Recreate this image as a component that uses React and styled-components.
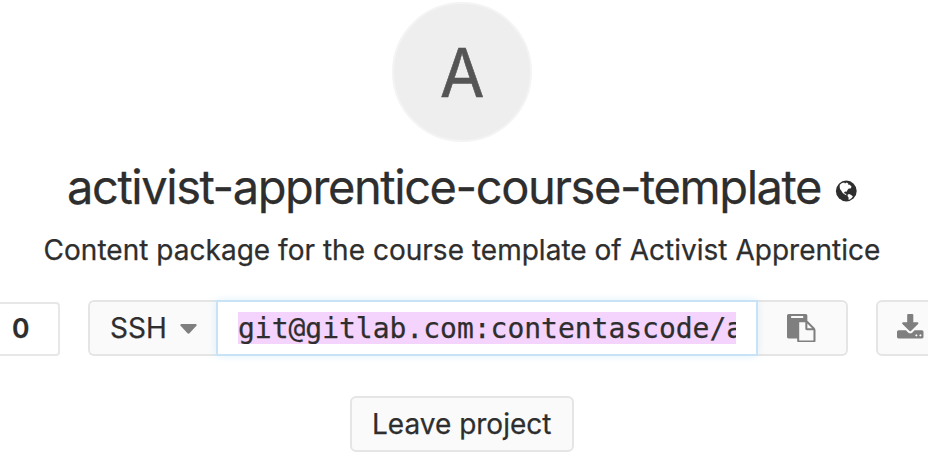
import React from "react";
import styled, { createGlobalStyle } from "styled-components";

const GlobalStyle = createGlobalStyle`
  * { box-sizing: border-box; }
  body { margin: 0; background: #fff; overflow: hidden; }
`;

const Page = styled.main`
  display: flex;
  flex-direction: column;
  align-items: center;
  width: 924px;
  height: 476px;
  padding-top: 2px;
  color: #2e2e2e;
  font-family: Inter, sans-serif;
  white-space: nowrap;
  -webkit-text-stroke: 0.25px currentColor;
`;

const Avatar = styled.div`
  display: flex;
  align-items: center;
  justify-content: center;
  width: 140px;
  height: 140px;
  flex: none;
  border: 2px solid #f4f4f4;
  border-radius: 50%;
  background: #eee;
  color: #555;
  font-size: 67px;
  line-height: 136px;
  padding-top: 2px;
  -webkit-text-stroke-width: 0.6px;
`;

const Letter = styled.span`
  transform: scaleX(0.96);
`;

const Title = styled.h1`
  display: flex;
  align-items: center;
  align-self: flex-start;
  height: 60px;
  margin: 15px 0 0 67px;
  font-size: 47px;
  font-weight: 400;
  line-height: 60px;
  letter-spacing: -1.43px;
`;

const TitleText = styled.span`
  width: 767px;
`;

const Globe = styled.svg`
  width: 24px;
  height: 24px;
  margin-top: 8px;
`;

const Description = styled.p`
  height: 36px;
  margin: 15px 0 0;
  font-size: 28px;
  line-height: 36px;
  letter-spacing: 0.02px;
`;

const Controls = styled.div`
  display: flex;
  align-items: flex-end;
  align-self: flex-start;
  height: 56px;
  margin-top: 32px;
  font-size: 28px;
`;

const Count = styled.div`
  width: 60px;
  height: 54px;
  margin-right: 28px;
  border: 2px solid #e7e7e7;
  border-left: 0;
  border-radius: 0 4px 4px 0;
  padding-left: 12px;
  font-size: 26.5px;
  font-weight: 600;
  line-height: 49px;
`;

const Button = styled.button`
  display: flex;
  align-items: center;
  height: 56px;
  width: ${(p) => p.$width}px;
  flex: none;
  padding: 0 0 0 ${(p) => p.$inset}px;
  border: 2px solid #e5e5e5;
  border-width: ${(p) => (p.$joined === "left" ? "2px 2px 2px 0" : p.$joined === "right" ? "2px 0 2px 2px" : "2px")};
  border-radius: ${(p) => (p.$joined === "left" ? "0 6px 6px 0" : p.$joined === "right" ? "6px 0 0 6px" : "6px")};
  background: #fafafa;
  color: #2e2e2e;
  font: 400 28px/52px Inter, sans-serif;
`;

const Caret = styled.svg`
  width: 17px;
  height: 10px;
  margin: 1px 0 0 13px;
`;

const CloneUrl = styled.div`
  z-index: 1;
  width: 542px;
  height: 56px;
  flex: none;
  padding: 10px 20px;
  border: 2px solid #c8e2f7;
  background: #fff;
  box-shadow: 0 0 8px rgba(120, 190, 240, 0.2);
`;

const SelectedText = styled.div`
  height: 32px;
  overflow: hidden;
  background: #f4d3fd;
  font: 28px/33px "DejaVu Sans Mono", monospace;
  letter-spacing: -0.02px;
`;

const Icon = styled.svg`
  width: 28.5px;
  height: 28.5px;
  fill: #7f7f7f;
`;

const Download = styled(Button)`
  margin-left: 28px;
`;

const Leave = styled(Button)`
  margin-top: 40px;
`;

export default function App() {
  return (
    <>
      <GlobalStyle />
      <Page>
        <Avatar><Letter>A</Letter></Avatar>
        <Title>
          <TitleText>activist-apprentice-course-template</TitleText>
          <Globe viewBox="0 0 24 24" aria-label="Public">
            <circle cx="12.3" cy="12" r="10.4" fill="#2e2e2e" />
            <path fill="#fff" d="M5.8 5.7 8 4l2.2-.6.8 1 1.5-.8 1.8.9-.4 1 1.9.2 1.8 2-1 1.7-1.8.2-1.3 1.5-.9 1.6-1.4-.2-1.2.9.7 1.2 1.1.2.8 1.4-1.4-.5-2.5-1.8-1.2-2-1.5-1.8L5.7 8Z" />
            <path fill="#fff" d="m13.8 15.5 1.4-.4 2 .9 1.7 1.4-1.2 1.6-1.8 1.4-1.4.4.1-2.3-1.1-1.6Z" />
          </Globe>
        </Title>
        <Description>Content package for the course template of Activist Apprentice</Description>
        <Controls>
          <Count>0</Count>
          <Button $width={128} $inset={20} $joined="right">
            SSH
            <Caret viewBox="0 0 17 10">
              <path fill="#7f7f7f" d="M1.2 0h14.6q1.5.5.6 1.8L9.5 9.2q-1 .9-2 0L.6 1.8Q-.3.5 1.2 0Z" />
            </Caret>
          </Button>
          <CloneUrl><SelectedText>git@gitlab.com:contentascode/activist-apprentice-course-template.git</SelectedText></CloneUrl>
          <Button $width={90} $inset={29} $joined="left" aria-label="Copy">
            <Icon viewBox="0 0 1792 1792">
              <path d="M768 1664h896v-640h-416q-40 0-68-28t-28-68v-416h-384v1152zm256-1440v-64q0-13-9.5-22.5t-22.5-9.5h-704q-13 0-22.5 9.5t-9.5 22.5v64q0 13 9.5 22.5t22.5 9.5h704q13 0 22.5-9.5t9.5-22.5zm256 672h299l-299-299v299zm512 128v672q0 40-28 68t-68 28h-960q-40 0-68-28t-28-68v-160h-544q-40 0-68-28t-28-68v-1344q0-40 28-68t68-28h1088q40 0 68 28t28 68v328q21 13 36 28l408 408q28 28 48 76t20 88z" />
            </Icon>
          </Button>
          <Download $width={90} $inset={18} aria-label="Download">
            <Icon viewBox="0 0 1792 1792">
              <path d="M1344 1344q0-26-19-45t-45-19-45 19-19 45 19 45 45 19 45-19 19-45zm256 0q0-26-19-45t-45-19-45 19-19 45 19 45 45 19 45-19 19-45zm128-224v320q0 40-28 68t-68 28h-1472q-40 0-68-28t-28-68v-320q0-40 28-68t68-28h465l135 136q58 56 136 56t136-56l136-136h464q40 0 68 28t28 68zm-325-569q17 41-14 70l-448 448q-18 19-45 19t-45-19l-448-448q-31-29-14-70 17-39 59-39h256v-448q0-26 19-45t45-19h256q26 0 45 19t19 45v448h256q42 0 59 39z" />
            </Icon>
          </Download>
        </Controls>
        <Leave $width={224} $inset={20}>Leave project</Leave>
      </Page>
    </>
  );
}
